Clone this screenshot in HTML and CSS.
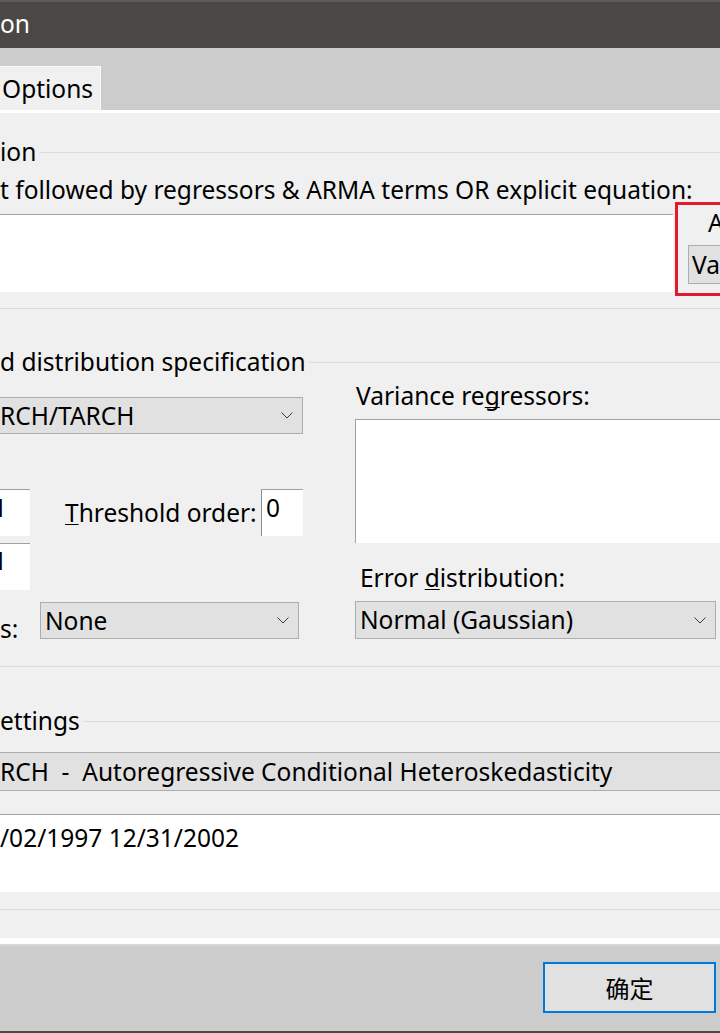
FILE: index.html
```html
<!DOCTYPE html>
<html lang="en">
<head>
<meta charset="utf-8">
<title>Equation Estimation - Options</title>
<link rel="stylesheet" href="styles.css">
</head>
<body>
<div class="window">
  <div class="titlebar">on</div>
  <div class="tabstrip"><div class="tab">Options</div></div>
  <div class="panel">
    <section class="group g1">
      <div class="ghead"><span>ion</span></div>
      <div class="prompt">t followed by regressors &amp; ARMA terms OR explicit equation:</div>
      <div class="eqrow">
        <div class="edit eq"></div>
        <div class="sidecol">
          <div class="sidelabel">A</div>
          <div class="btn va">Va</div>
        </div>
      </div>
    </section>
    <section class="group g2">
      <div class="ghead"><span>d distribution specification</span></div>
      <div class="cols">
        <div class="col-left">
          <div class="combo cut c-model"><span>RCH/TARCH</span><svg class="chev" width="12" height="7" viewBox="0 0 12 7"><polyline points="0.5,0.5 6,6 11.5,0.5"/></svg></div>
          <div class="order-row">
            <div class="edit small">1</div>
            <div class="thr-label"><u>T</u>hreshold order:</div>
            <div class="edit zero">0</div>
          </div>
          <div class="edit small second">1</div>
          <div class="s-row">
            <div class="s-label">s:</div>
            <div class="combo c-none"><span>None</span><svg class="chev" width="12" height="7" viewBox="0 0 12 7"><polyline points="0.5,0.5 6,6 11.5,0.5"/></svg></div>
          </div>
        </div>
        <div class="col-right">
          <div class="label vr">Variance re<u>g</u>ressors:</div>
          <div class="listbox"></div>
          <div class="label ed">Error <u>d</u>istribution:</div>
          <div class="combo c-normal"><span>Normal (Gaussian)</span><svg class="chev" width="12" height="7" viewBox="0 0 12 7"><polyline points="0.5,0.5 6,6 11.5,0.5"/></svg></div>
        </div>
      </div>
    </section>
    <section class="group g3">
      <div class="ghead"><span>ettings</span></div>
      <div class="bar">RCH  -  Autoregressive Conditional Heteroskedasticity</div>
      <div class="edit sample">/02/1997 12/31/2002</div>
    </section>
  </div>
  <div class="footer"><div class="btn ok">确定</div></div>
</div>
</body>
</html>
```

FILE: styles.css
```css
* { box-sizing: border-box; }
html, body { margin: 0; padding: 0; }
body {
  font-family: "Noto Sans", "Noto Sans CJK SC", sans-serif;
  font-size: 24.5px;
  color: #000;
  background: #cccccc;
}
u { text-decoration: underline; text-decoration-thickness: 1px; text-underline-offset: 2px; text-decoration-skip-ink: none; }

.window {
  width: 720px;
  height: 1033px;
  overflow: hidden;
  display: flex;
  flex-direction: column;
}

.titlebar {
  flex: none;
  height: 48px;
  border-top: 2px solid #5c5b59;
  background: #4a4846;
  color: #ffffff;
  line-height: 43px;
  white-space: nowrap;
}

.tabstrip {
  flex: none;
  height: 62px;
  background: #cccccc;
  display: flex;
  align-items: flex-end;
}
.tab {
  width: 101px;
  height: 44px;
  background: #f0f0f0;
  border-top: 1px solid #f9f9f9;
  border-right: 1px solid #f9f9f9;
  padding: 4px 0 0 2px;
  line-height: 36px;
  white-space: nowrap;
}

.panel {
  flex: none;
  background: #f0f0f0;
  border-top: 3px solid #ffffff;
  border-bottom: 6px solid #ffffff;
  padding: 23px 0 28px 0;
}

.group { border-bottom: 1px solid #dcdcdc; }
.ghead {
  height: 32px;
  line-height: 32px;
  display: flex;
  align-items: flex-start;
  white-space: nowrap;
}
.ghead span { padding-right: 3px; }
.ghead::after {
  content: "";
  flex: 1;
  height: 1px;
  margin-top: 16px;
  background: #dcdcdc;
}

.edit { background: #ffffff; border-top: 1px solid #a0a0a0; white-space: nowrap; }

/* group 1 */
.g1 { padding-bottom: 12px; }
.prompt { margin-top: 6px; line-height: 32px; white-space: nowrap; }
.eqrow {
  margin-top: -4px;
  display: flex;
  align-items: flex-start;
  gap: 2px;
}
.eq { flex: none; width: 673px; height: 78px; margin-top: 12px; }
.sidecol {
  flex: none;
  width: 120px;
  height: 94px;
  border: 3px solid #e3192c;
  padding-left: 10px;
}
.sidelabel { margin-top: 2px; padding-left: 20px; line-height: 32px; }
.btn { background: #e1e1e1; white-space: nowrap; }
.va {
  margin-top: 6px;
  height: 39px;
  border: 1px solid #adadad;
  border-right: 0;
  line-height: 37px;
  padding-left: 3px;
}

/* group 2 */
.g2 { margin-top: 37px; padding-bottom: 27px; }
.cols { display: flex; align-items: flex-start; gap: 52px; }
.col-left { flex: none; width: 303px; }
.col-right { flex: 1; min-width: 0; }

.combo {
  display: flex;
  align-items: center;
  justify-content: space-between;
  background: #e1e1e1;
  border: 1px solid #adadad;
  line-height: 32px;
  padding: 0 9px 0 4px;
  white-space: nowrap;
}
.combo.cut { border-left: 0; padding-left: 0; }
.chev { flex: none; }
.chev polyline { fill: none; stroke: #3c3c3c; stroke-width: 1; }

.c-model { margin-top: 19px; height: 37px; }

.order-row { margin-top: 55px; height: 47px; display: flex; align-items: flex-start; }
.small {
  flex: none;
  width: 50px;
  height: 47px;
  margin-left: -20px;
  padding: 2px 0 0 13px;
  line-height: 32px;
}
.second { padding-top: 1px; margin-top: 7px; }
.thr-label { flex: none; margin-left: 35px; margin-top: 8px; line-height: 32px; white-space: nowrap; }
.zero {
  flex: none;
  margin-left: auto;
  width: 42px;
  height: 47px;
  border-left: 1px solid #8c8c8c;
  padding: 2px 0 0 4px;
  line-height: 32px;
}

.s-row { margin-top: 12px; height: 37px; display: flex; align-items: flex-start; }
.s-label { flex: none; width: 40px; margin-top: 16px; line-height: 22px; }
.c-none { flex: none; width: 259px; height: 37px; }

.label { line-height: 32px; white-space: nowrap; }
.vr { margin-top: 2px; padding-left: 1px; }
.listbox {
  margin-top: 7px;
  height: 124px;
  background: #ffffff;
  border-top: 1px solid #a0a0a0;
  border-left: 1px solid #a0a0a0;
}
.ed { margin-top: 19px; padding-left: 5px; }
.c-normal { margin-top: 7px; width: 361px; height: 38px; }

/* group 3 */
.g3 { margin-top: 38px; padding-bottom: 17px; }
.bar {
  margin-top: 15px;
  height: 39px;
  background: #e1e1e1;
  border-top: 1px solid #adadad;
  border-bottom: 1px solid #adadad;
  line-height: 37px;
  white-space: pre;
}
.sample { margin-top: 23px; height: 78px; padding-top: 7px; line-height: 32px; }

/* footer */
.footer {
  flex: 1;
  background: #cccccc;
  border-top: 2px solid #d8d8d8;
  border-bottom: 2px solid #4a4846;
  display: flex;
  justify-content: flex-end;
  align-items: flex-start;
  padding: 16px 4px 0 0;
}
.ok {
  width: 173px;
  height: 51px;
  border: 2px solid #0078d7;
  display: flex;
  align-items: center;
  justify-content: center;
  font-family: "Noto Sans CJK SC", sans-serif;
  font-size: 24px;
}
```
